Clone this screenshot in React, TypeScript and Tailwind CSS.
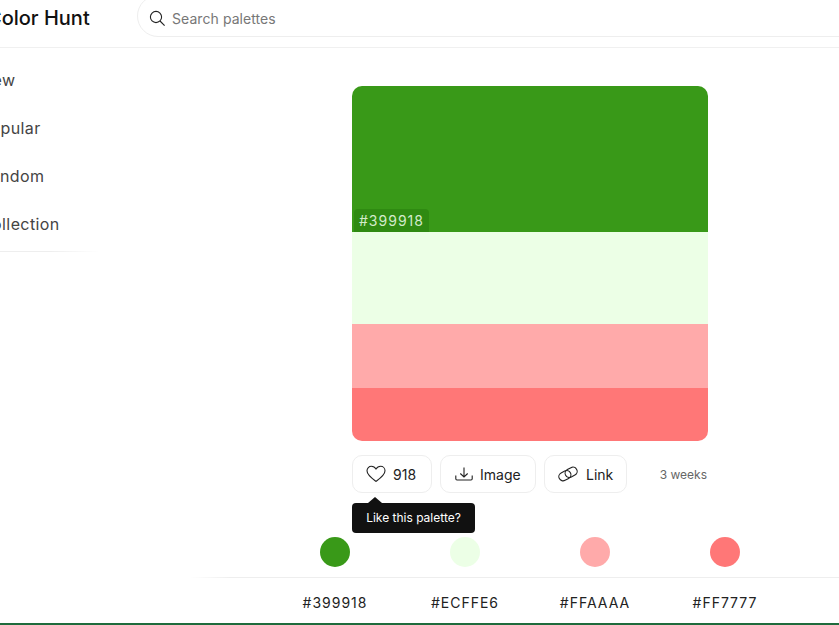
import React from 'react';

const navItems = ['New', 'Popular', 'Random', 'Collection'];

const colors = [
  { hex: '#399918', dot: 'bg-[#399918]' },
  { hex: '#ECFFE6', dot: 'bg-[#ECFFE6]' },
  { hex: '#FFAAAA', dot: 'bg-[#FFAAAA]' },
  { hex: '#FF7777', dot: 'bg-[#FF7777]' },
];

function SearchIcon() {
  return (
    <svg width="17" height="17" viewBox="0 0 17 17" fill="none" stroke="#222" strokeWidth="1.1">
      <circle cx="7" cy="7" r="5.6" />
      <path d="M11 11l4.600 4.600" />
    </svg>
  );
}

function HeartIcon() {
  return (
    <svg width="20" height="18" viewBox="0 0 20 18" fill="none" stroke="#222" strokeWidth="1.1">
      <path d="M10 16.400C6.200 13.600 1 10 1 5.800 1 3.200 3 1.200 5.400 1.200 7.300 1.200 9 2.300 10 4c1-1.700 2.700-2.800 4.600-2.800C17 1.200 19 3.200 19 5.800c0 4.200-5.200 7.800-9 10.600z" />
    </svg>
  );
}

function DownloadIcon() {
  return (
    <svg width="18" height="14" viewBox="0 0 18 14" fill="none" stroke="#222" strokeWidth="1.1">
      <path d="M9 .5v9.500M5.300 6.500 9 10l3.700-3.500" />
      <path d="M.8 8.500v3.300c0 .7.500 1.200 1.200 1.200h14c.7 0 1.200-.5 1.200-1.200V8.500" />
    </svg>
  );
}

function LinkIcon() {
  return (
    <svg width="20" height="16" viewBox="0 0 20 16" fill="none" stroke="#222" strokeWidth="1.1">
      <g transform="rotate(-28 10 8)">
        <rect x="0.2" y="3.800" width="12.500" height="8.400" rx="4.200" />
        <rect x="7.300" y="3.800" width="12.500" height="8.400" rx="4.200" />
      </g>
    </svg>
  );
}

export default function App() {
  return (
    <div className="h-[625px] w-[839px] overflow-hidden bg-white font-['Inter',sans-serif] text-[#222]">
      <header className="flex h-[48px] items-start border-b border-[#f0f0f0]">
        <div className="w-[137px] shrink-0 overflow-hidden">
          <div className="-ml-[13px] mt-[6px] whitespace-nowrap text-[20px] font-medium leading-6 text-[#111]">Color Hunt</div>
        </div>
        <div className="-mt-[5px] flex h-[42px] w-[760px] shrink-0 items-center gap-[6px] rounded-full border border-[#eeeeee] pl-[11px] pt-[4px]">
          <SearchIcon />
          <span className="text-[14px] tracking-[0.07px] text-[#777]">Search palettes</span>
        </div>
      </header>

      <div className="flex">
        <aside className="w-[190px] shrink-0 overflow-hidden">
          <nav className="mt-[8px] flex w-[100px] flex-col">
            {navItems.map((item) => (
              <div key={item} className="-ml-[20px] flex h-[48px] items-center whitespace-nowrap text-[16px] tracking-[0.4px] text-[#444]">
                {item}
              </div>
            ))}
          </nav>
          <div className="mt-[3px] h-px w-[100px] bg-gradient-to-r from-[#eeeeee] via-[#eeeeee] to-transparent" />
        </aside>

        <main className="flex w-[680px] shrink-0 flex-col items-center">
          <div className="mt-[38px] w-[356px]">
            <div className="overflow-hidden rounded-[10px]">
              <div className="flex h-[146px] items-end bg-[#399918]">
                <span className="ml-[2px] rounded-t-[4px] bg-[#2f8a12] px-[5px] py-[3px] text-[14px] leading-[17px] tracking-[1px] text-[#d4ebcb]">#399918</span>
              </div>
              <div className="h-[92px] bg-[#ECFFE6]" />
              <div className="h-[64px] bg-[#FFAAAA]" />
              <div className="h-[53px] bg-[#FF7777]" />
            </div>

            <div className="relative mt-[14px] flex h-[38px] items-center gap-[8px]">
              <button className="flex h-[38px] w-[80px] items-center gap-[7px] rounded-[10px] border border-[#eeeeee] pl-[13px] text-[14px]">
                <HeartIcon />
                <span>918</span>
              </button>
              <button className="flex h-[38px] w-[96px] items-center gap-[7px] rounded-[10px] border border-[#eeeeee] pl-[14px] text-[14px]">
                <DownloadIcon />
                <span>Image</span>
              </button>
              <button className="flex h-[38px] w-[83px] items-center gap-[8px] rounded-[10px] border border-[#eeeeee] pl-[13px] text-[14px]">
                <LinkIcon />
                <span>Link</span>
              </button>
              <span className="ml-auto mr-[1px] mt-[2px] text-[12px] text-[#666]">3 weeks</span>

              <div className="absolute left-0 top-[48px] flex h-[30px] w-[123px] items-center justify-center rounded-[4px] bg-[#111] text-[12px] text-white">
                <div className="absolute -top-[6px] left-[16px] h-0 w-0 border-x-[7px] border-b-[6px] border-x-transparent border-b-[#111]" />
                Like this palette?
              </div>
            </div>
          </div>

          <div className="mt-[44px] grid w-[520px] grid-cols-4">
            {colors.map((c) => (
              <div key={c.hex} className="flex justify-center">
                <div className={`h-[30px] w-[30px] rounded-full ${c.dot}`} />
              </div>
            ))}
          </div>
          <div className="mt-[10px] h-px w-full bg-gradient-to-r from-white to-[#eeeeee] to-[6%]" />
          <div className="grid h-[45px] w-[520px] grid-cols-4 pt-[4px]">
            {colors.map((c) => (
              <div key={c.hex} className="flex items-center justify-center text-[14px] tracking-[1px] text-[#222]">
                {c.hex}
              </div>
            ))}
          </div>
        </main>
      </div>
      <div className="h-[2px] w-full bg-[#1f6b3c]" />
    </div>
  );
}
